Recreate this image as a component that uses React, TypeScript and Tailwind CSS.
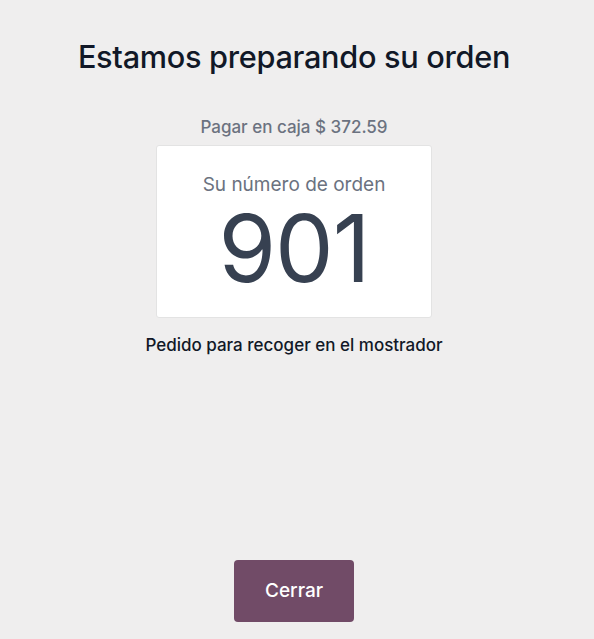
import React from "react";

function OrderCard({ number }: { number: string }) {
  return (
    <div className="w-[276px] h-[173px] bg-white border border-[#e3e3e3] rounded-[3px] flex flex-col items-center">
      <span className="mt-[27px] text-[19px] leading-[24px] text-[#6b7280]">
        Su número de orden
      </span>
      <span className="mt-[5px] text-[93px] leading-[93px] text-[#374151] tracking-[-1px]">
        {number}
      </span>
    </div>
  );
}

export default function App() {
  return (
    <div
      className="w-full h-[639px] bg-[#efeeee] flex flex-col items-center pr-[6px]"
      style={{ fontFamily: "Inter, 'Liberation Sans', sans-serif" }}
    >
      <h1 className="mt-[37px] text-[30.7px] leading-[40px] font-medium text-[#111827] tracking-[-0.3px]">
        Estamos preparando su orden
      </h1>
      <p className="mt-[38px] text-[17px] leading-[24px] text-[#6b7280] font-medium">
        Pagar en caja $ 372.59
      </p>
      <div className="mt-[6px]">
        <OrderCard number="901" />
      </div>
      <p className="mt-[15px] text-[17px] leading-[24px] text-[#111827] font-medium">
        Pedido para recoger en el mostrador
      </p>
      <div className="flex-1" />
      <button className="mb-[17px] w-[120px] h-[62px] bg-[#714b67] rounded-[4px] text-white text-[19px] font-medium">
        Cerrar
      </button>
    </div>
  );
}
